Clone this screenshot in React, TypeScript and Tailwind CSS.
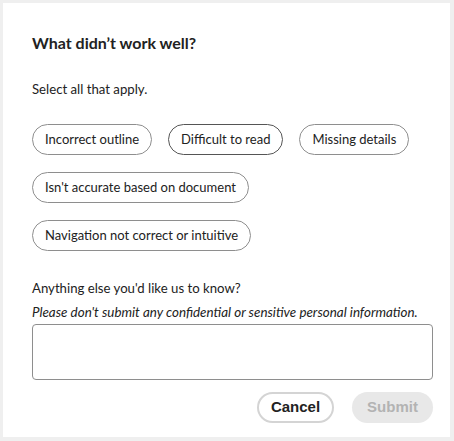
import React, { useState } from 'react';

const options = [
  ['Incorrect outline', 'Difficult to read', 'Missing details'],
  ["Isn't accurate based on document"],
  ['Navigation not correct or intuitive'],
];

export default function App() {
  const [note, setNote] = useState('');

  return (
    <div className="w-[454px] h-[441px] bg-[#efefef] pt-[3px] pl-[3px] pr-[4px] pb-[4px] font-['Lato',sans-serif] text-[#222]">
      <div className="h-full bg-white pl-[29px] pr-[17px] pt-[29px]">
        <h2 className="text-[16px] font-bold leading-[22px]">What didn’t work well?</h2>
        <p className="mt-[25px] text-[13.2px] leading-[20px]">Select all that apply.</p>

        <div className="mt-[25px] flex flex-col gap-[17px]">
          {options.map((row, i) => (
            <div key={i} className="flex gap-[16px]">
              {row.map((label) => (
                <button
                  key={label}
                  className={
                    'shrink-0 whitespace-nowrap h-[31px] px-[12px] rounded-full border bg-white text-[13px] text-[#222] ' +
                    (label === 'Difficult to read' ? 'border-[#555]' : 'border-[#8e8e8e]')
                  }
                >
                  {label}
                </button>
              ))}
            </div>
          ))}
        </div>

        <p className="mt-[27px] text-[13.2px] leading-[20px]">Anything else you'd like us to know?</p>
        <p className="mt-[5px] text-[13.4px] leading-[18px] italic">
          Please don't submit any confidential or sensitive personal information.
        </p>
        <textarea
          value={note}
          onChange={(e) => setNote(e.target.value)}
          className="mt-[3px] block w-full h-[56px] rounded-[4px] border border-[#8e8e8e] resize-none outline-none px-2 py-1 text-[14px]"
        />

        <div className="mt-[12px] flex justify-end gap-[18px] font-['Liberation_Sans',sans-serif] font-bold text-[15px]">
          <button className="h-[31px] w-[77px] rounded-full border-2 border-[#d4d4d4] bg-white text-[#222]">
            Cancel
          </button>
          <button disabled className="h-[31px] w-[81px] rounded-full bg-[#e8e8e8] text-[#b3b3b3]">
            Submit
          </button>
        </div>
      </div>
    </div>
  );
}
